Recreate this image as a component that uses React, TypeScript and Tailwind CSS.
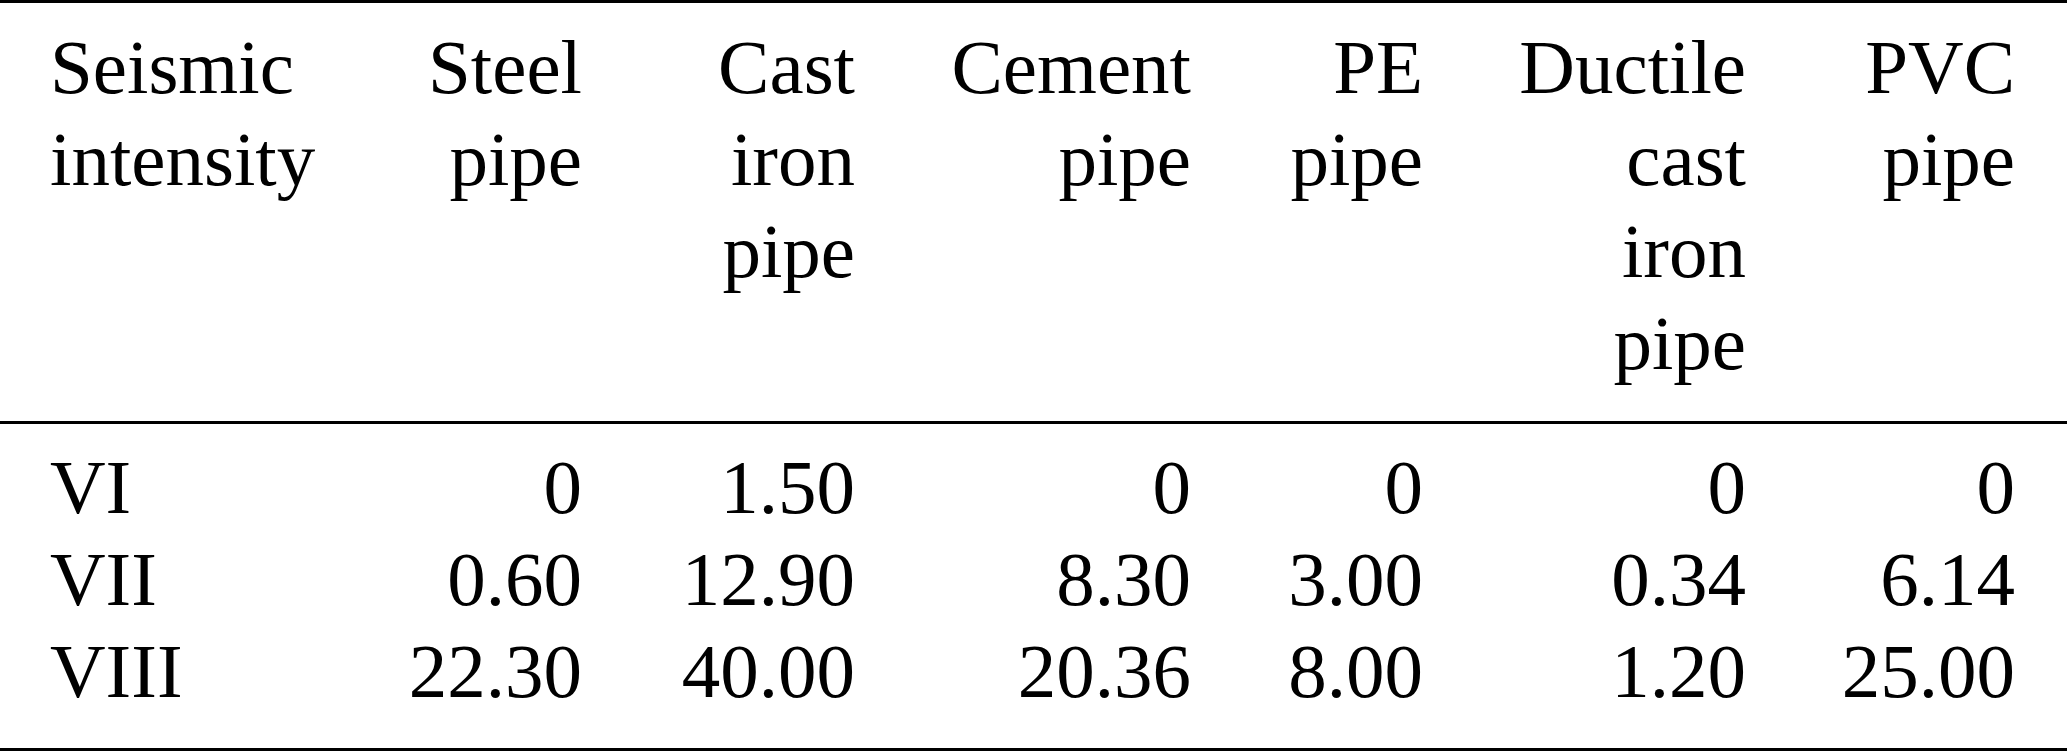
const headers = [
  ["Seismic", "intensity"],
  ["Steel", "pipe"],
  ["Cast", "iron", "pipe"],
  ["Cement", "pipe"],
  ["PE", "pipe"],
  ["Ductile", "cast", "iron", "pipe"],
  ["PVC", "pipe"],
];

const rows = [
  ["VI", "0", "1.50", "0", "0", "0", "0"],
  ["VII", "0.60", "12.90", "8.30", "3.00", "0.34", "6.14"],
  ["VIII", "22.30", "40.00", "20.36", "8.00", "1.20", "25.00"],
];

const cols =
  "grid grid-cols-[330px_252px_273px_336px_232px_323px_269px] pr-[52px]";

export default function App() {
  return (
    <div className="h-[753px] w-[2067px] bg-white font-['Liberation_Serif',serif] text-[77px] leading-[92px] text-black">
      <div className="border-y-[3px] border-black">
        {/* En-tête */}
        <div className={`${cols} pt-[18px] pb-[32px]`}>
          {headers.map((lines, i) => (
            <div key={i} className={i === 0 ? "pl-[50px] text-left" : "text-right"}>
              {lines.map((line) => (
                <div key={line}>{line}</div>
              ))}
            </div>
          ))}
        </div>

        {/* Données */}
        <div className="border-t-[3px] border-black pt-[17px] pb-[31px]">
          {rows.map((row) => (
            <div key={row[0]} className={cols}>
              {row.map((cell, i) => (
                <div key={i} className={i === 0 ? "pl-[50px] text-left" : "text-right"}>
                  {cell}
                </div>
              ))}
            </div>
          ))}
        </div>
      </div>
    </div>
  );
}
